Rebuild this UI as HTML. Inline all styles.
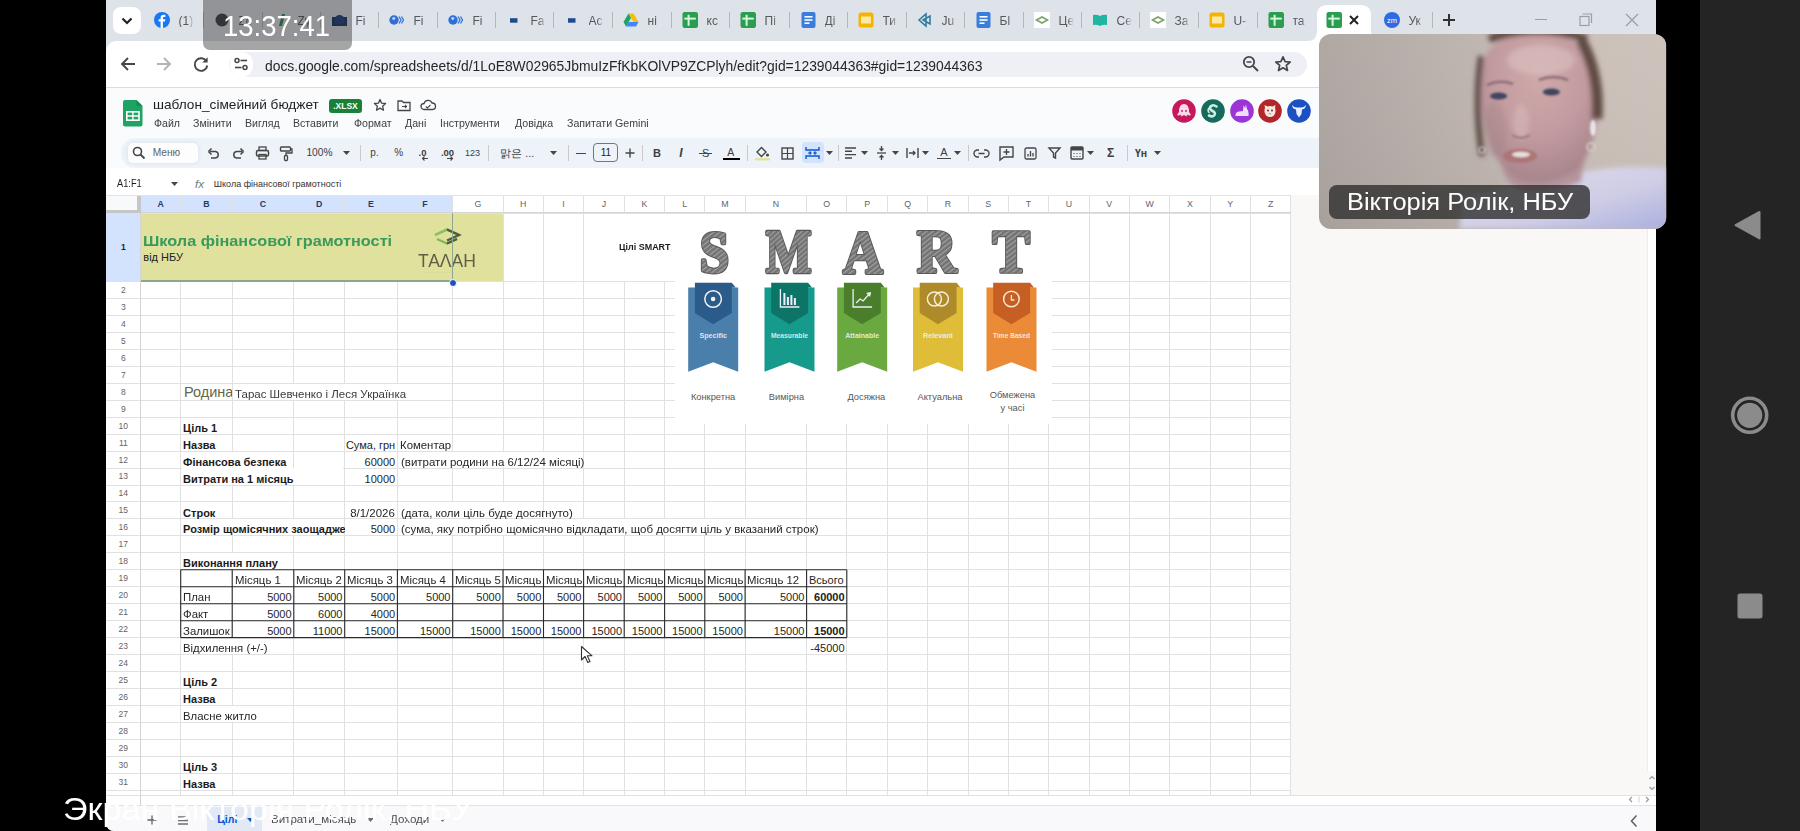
<!DOCTYPE html><html><head><meta charset="utf-8"><style>
*{margin:0;padding:0;box-sizing:border-box}
html,body{width:1800px;height:831px;overflow:hidden;background:#000;font-family:"Liberation Sans",sans-serif;position:relative}
.a{position:absolute}
.t{position:absolute;white-space:nowrap;line-height:1}
svg{position:absolute;overflow:visible}
</style></head><body>

<div class="a" style="left:1700px;top:0;width:100px;height:831px;background:#242424"></div>
<svg style="left:1700px;top:0" width="100" height="831"><path d="M59.5 212 L59.5 238.5 L35.5 225.2 Z" fill="#8b8b8b" stroke="#8b8b8b" stroke-width="2" stroke-linejoin="round"/><circle cx="49.7" cy="415.3" r="17" fill="none" stroke="#8b8b8b" stroke-width="3.6"/><circle cx="49.7" cy="415.3" r="12.6" fill="#8b8b8b"/><rect x="37.5" y="593.5" width="25" height="25" rx="2.5" fill="#8b8b8b"/></svg>
<div class="a" style="left:106px;top:0;width:1550px;height:831px;background:#dee2e9;border-bottom-left-radius:8px;overflow:hidden"></div>
<div class="a" style="left:113px;top:6.5px;width:28px;height:27px;background:#fff;border-radius:8px"></div>
<svg style="left:113px;top:6.5px" width="28" height="27"><path d="M9.5 11.5 L14 16 L18.5 11.5" fill="none" stroke="#202124" stroke-width="2.2"/></svg>
<svg style="left:154.0px;top:12.2px" width="16" height="16"><circle cx="8" cy="8" r="8" fill="#1877f2"/><path d="M8.9 16 V9.6 H11 L11.3 7.3 H8.9 V6.1 C8.9 5.4 9.2 5 10 5 H11.4 V3 C11 2.9 10.3 2.8 9.6 2.8 C7.6 2.8 6.6 4 6.6 5.9 V7.3 H4.6 V9.6 H6.6 V16 Z" fill="#fff"/></svg>
<div class="t" style="left:178.5px;top:14.6px;font-size:12px;color:#55585d;width:15px;overflow:hidden;-webkit-mask-image:linear-gradient(90deg,#000 55%,transparent)">(1)</div>
<svg style="left:214.0px;top:12.2px" width="16" height="16"><circle cx="8" cy="8" r="6.5" fill="#3a3d41"/></svg>
<div class="t" style="left:238.5px;top:14.6px;font-size:12px;color:#55585d;width:15px;overflow:hidden;-webkit-mask-image:linear-gradient(90deg,#000 55%,transparent)">Zo</div>
<div class="a" style="left:202.5px;top:12px;width:1.5px;height:16px;background:#b4b7bb"></div>
<svg style="left:273.0px;top:12.2px" width="16" height="16"><path d="M6 14 L9 2 L12 2 L9 14 Z" fill="#2f8a4a"/></svg>
<div class="t" style="left:297.5px;top:14.6px;font-size:12px;color:#55585d;width:15px;overflow:hidden;-webkit-mask-image:linear-gradient(90deg,#000 55%,transparent)">Zy</div>
<div class="a" style="left:261.5px;top:12px;width:1.5px;height:16px;background:#b4b7bb"></div>
<svg style="left:331.0px;top:12.2px" width="16" height="16"><rect x="1" y="5" width="15" height="9" fill="#14346e"/><circle cx="8.5" cy="8" r="5" fill="#1c3f80"/></svg>
<div class="t" style="left:355.5px;top:14.6px;font-size:12px;color:#55585d;width:15px;overflow:hidden;-webkit-mask-image:linear-gradient(90deg,#000 55%,transparent)">Fi</div>
<div class="a" style="left:319.5px;top:12px;width:1.5px;height:16px;background:#b4b7bb"></div>
<svg style="left:389.0px;top:12.2px" width="16" height="16"><circle cx="5" cy="8" r="4.7" fill="#2f6fd6"/><path d="M3 6 Q5 4 6.5 6 Q6 8.5 4 8 Z" fill="#fff" opacity=".7"/><path d="M10 4.5 L12 8 L10 11.5 M12.5 4.5 L14.5 8 L12.5 11.5" fill="none" stroke="#3a7be0" stroke-width="1.4"/></svg>
<div class="t" style="left:413.5px;top:14.6px;font-size:12px;color:#55585d;width:15px;overflow:hidden;-webkit-mask-image:linear-gradient(90deg,#000 55%,transparent)">Fi</div>
<div class="a" style="left:377.5px;top:12px;width:1.5px;height:16px;background:#b4b7bb"></div>
<svg style="left:448.0px;top:12.2px" width="16" height="16"><circle cx="5" cy="8" r="4.7" fill="#2f6fd6"/><path d="M3 6 Q5 4 6.5 6 Q6 8.5 4 8 Z" fill="#fff" opacity=".7"/><path d="M10 4.5 L12 8 L10 11.5 M12.5 4.5 L14.5 8 L12.5 11.5" fill="none" stroke="#3a7be0" stroke-width="1.4"/></svg>
<div class="t" style="left:472.5px;top:14.6px;font-size:12px;color:#55585d;width:15px;overflow:hidden;-webkit-mask-image:linear-gradient(90deg,#000 55%,transparent)">Fi</div>
<div class="a" style="left:436.5px;top:12px;width:1.5px;height:16px;background:#b4b7bb"></div>
<svg style="left:506.0px;top:12.2px" width="16" height="16"><rect x="4" y="6.2" width="7.5" height="4.5" fill="#1e4b8c"/></svg>
<div class="t" style="left:530.5px;top:14.6px;font-size:12px;color:#55585d;width:15px;overflow:hidden;-webkit-mask-image:linear-gradient(90deg,#000 55%,transparent)">Fa</div>
<div class="a" style="left:494.5px;top:12px;width:1.5px;height:16px;background:#b4b7bb"></div>
<svg style="left:564.0px;top:12.2px" width="16" height="16"><rect x="4" y="6.2" width="7.5" height="4.5" fill="#1e4b8c"/></svg>
<div class="t" style="left:588.5px;top:14.6px;font-size:12px;color:#55585d;width:15px;overflow:hidden;-webkit-mask-image:linear-gradient(90deg,#000 55%,transparent)">Ac</div>
<div class="a" style="left:552.5px;top:12px;width:1.5px;height:16px;background:#b4b7bb"></div>
<svg style="left:623.0px;top:12.2px" width="16" height="16"><path d="M5.5 1.5 H10.5 L15.5 10 H10.5 Z" fill="#fbbc04"/><path d="M5.5 1.5 L0.5 10 L3 14.5 L8 6 Z" fill="#1fa463"/><path d="M3 14.5 H13 L15.5 10 H5.5 Z" fill="#4285f4"/></svg>
<div class="t" style="left:647.5px;top:14.6px;font-size:12px;color:#55585d;width:15px;overflow:hidden;-webkit-mask-image:linear-gradient(90deg,#000 55%,transparent)">ні</div>
<div class="a" style="left:611.5px;top:12px;width:1.5px;height:16px;background:#b4b7bb"></div>
<svg style="left:682.0px;top:12.2px" width="16" height="16"><rect x="0.5" y="0" width="15.5" height="16" rx="2.2" fill="#2a9d50"/><rect x="5.6" y="2.8" width="2" height="11" fill="#d5f8dc"/><rect x="2.3" y="5.6" width="11.5" height="2" fill="#d5f8dc"/></svg>
<div class="t" style="left:706.5px;top:14.6px;font-size:12px;color:#55585d;width:15px;overflow:hidden;-webkit-mask-image:linear-gradient(90deg,#000 55%,transparent)">кс</div>
<div class="a" style="left:670.5px;top:12px;width:1.5px;height:16px;background:#b4b7bb"></div>
<svg style="left:740.0px;top:12.2px" width="16" height="16"><rect x="0.5" y="0" width="15.5" height="16" rx="2.2" fill="#2a9d50"/><rect x="5.6" y="2.8" width="2" height="11" fill="#d5f8dc"/><rect x="2.3" y="5.6" width="11.5" height="2" fill="#d5f8dc"/></svg>
<div class="t" style="left:764.5px;top:14.6px;font-size:12px;color:#55585d;width:15px;overflow:hidden;-webkit-mask-image:linear-gradient(90deg,#000 55%,transparent)">Пі</div>
<div class="a" style="left:728.5px;top:12px;width:1.5px;height:16px;background:#b4b7bb"></div>
<svg style="left:800.0px;top:12.2px" width="16" height="16"><rect x="1.5" y="0" width="14" height="16" rx="2" fill="#3b7ddd"/><rect x="4.5" y="4" width="8" height="1.6" fill="#fff"/><rect x="4.5" y="7.2" width="8" height="1.6" fill="#fff"/><rect x="4.5" y="10.4" width="5" height="1.6" fill="#fff"/></svg>
<div class="t" style="left:824.5px;top:14.6px;font-size:12px;color:#55585d;width:15px;overflow:hidden;-webkit-mask-image:linear-gradient(90deg,#000 55%,transparent)">Ді</div>
<div class="a" style="left:788.5px;top:12px;width:1.5px;height:16px;background:#b4b7bb"></div>
<svg style="left:858.0px;top:12.2px" width="16" height="16"><rect x="0.5" y="0.5" width="15" height="15" rx="2.5" fill="#f4b400"/><rect x="3" y="4.5" width="10" height="7" fill="#fbe9a6"/></svg>
<div class="t" style="left:882.5px;top:14.6px;font-size:12px;color:#55585d;width:15px;overflow:hidden;-webkit-mask-image:linear-gradient(90deg,#000 55%,transparent)">Ти</div>
<div class="a" style="left:846.5px;top:12px;width:1.5px;height:16px;background:#b4b7bb"></div>
<svg style="left:917.0px;top:12.2px" width="16" height="16"><path d="M2 8 L9 2 L9 14 Z M6 8 L13 4 L13 12 Z" fill="none" stroke="#2a7a9a" stroke-width="1.5"/></svg>
<div class="t" style="left:941.5px;top:14.6px;font-size:12px;color:#55585d;width:15px;overflow:hidden;-webkit-mask-image:linear-gradient(90deg,#000 55%,transparent)">Ju</div>
<div class="a" style="left:905.5px;top:12px;width:1.5px;height:16px;background:#b4b7bb"></div>
<svg style="left:975.0px;top:12.2px" width="16" height="16"><rect x="1.5" y="0" width="14" height="16" rx="2" fill="#3b7ddd"/><rect x="4.5" y="4" width="8" height="1.6" fill="#fff"/><rect x="4.5" y="7.2" width="8" height="1.6" fill="#fff"/><rect x="4.5" y="10.4" width="5" height="1.6" fill="#fff"/></svg>
<div class="t" style="left:999.5px;top:14.6px;font-size:12px;color:#55585d;width:15px;overflow:hidden;-webkit-mask-image:linear-gradient(90deg,#000 55%,transparent)">Бl</div>
<div class="a" style="left:963.5px;top:12px;width:1.5px;height:16px;background:#b4b7bb"></div>
<svg style="left:1034.0px;top:12.2px" width="16" height="16"><rect x="0" y="0" width="16" height="16" fill="#fff"/><path d="M2.5 8 L8 5 L13.5 8 L8 11 Z" fill="none" stroke="#7aa36a" stroke-width="1.6"/></svg>
<div class="t" style="left:1058.5px;top:14.6px;font-size:12px;color:#55585d;width:15px;overflow:hidden;-webkit-mask-image:linear-gradient(90deg,#000 55%,transparent)">Це</div>
<div class="a" style="left:1022.5px;top:12px;width:1.5px;height:16px;background:#b4b7bb"></div>
<svg style="left:1092.0px;top:12.2px" width="16" height="16"><path d="M1 3 Q4.5 2 8 4 Q11.5 2 15 3 V13 Q11.5 12 8 14 Q4.5 12 1 13 Z" fill="#1fb5a0"/></svg>
<div class="t" style="left:1116.5px;top:14.6px;font-size:12px;color:#55585d;width:15px;overflow:hidden;-webkit-mask-image:linear-gradient(90deg,#000 55%,transparent)">Се</div>
<div class="a" style="left:1080.5px;top:12px;width:1.5px;height:16px;background:#b4b7bb"></div>
<svg style="left:1150.0px;top:12.2px" width="16" height="16"><rect x="0" y="0" width="16" height="16" fill="#fff"/><path d="M2.5 8 L8 5 L13.5 8 L8 11 Z" fill="none" stroke="#7aa36a" stroke-width="1.6"/></svg>
<div class="t" style="left:1174.5px;top:14.6px;font-size:12px;color:#55585d;width:15px;overflow:hidden;-webkit-mask-image:linear-gradient(90deg,#000 55%,transparent)">За</div>
<div class="a" style="left:1138.5px;top:12px;width:1.5px;height:16px;background:#b4b7bb"></div>
<svg style="left:1209.0px;top:12.2px" width="16" height="16"><rect x="0.5" y="0.5" width="15" height="15" rx="2.5" fill="#f4b400"/><rect x="3" y="4.5" width="10" height="7" fill="#fbe9a6"/></svg>
<div class="t" style="left:1233.5px;top:14.6px;font-size:12px;color:#55585d;width:15px;overflow:hidden;-webkit-mask-image:linear-gradient(90deg,#000 55%,transparent)">U-</div>
<div class="a" style="left:1197.5px;top:12px;width:1.5px;height:16px;background:#b4b7bb"></div>
<svg style="left:1268.0px;top:12.2px" width="16" height="16"><rect x="0.5" y="0" width="15.5" height="16" rx="2.2" fill="#2a9d50"/><rect x="5.6" y="2.8" width="2" height="11" fill="#d5f8dc"/><rect x="2.3" y="5.6" width="11.5" height="2" fill="#d5f8dc"/></svg>
<div class="t" style="left:1292.5px;top:14.6px;font-size:12px;color:#55585d;width:15px;overflow:hidden;-webkit-mask-image:linear-gradient(90deg,#000 55%,transparent)">та</div>
<div class="a" style="left:1256.5px;top:12px;width:1.5px;height:16px;background:#b4b7bb"></div>
<div class="a" style="left:1431.5px;top:12px;width:1.5px;height:16px;background:#b4b7bb"></div>
<div class="a" style="left:1317px;top:5px;width:54px;height:36px;background:#fff;border-radius:9px 9px 0 0"></div>
<svg style="left:1307px;top:30px" width="74" height="11"><path d="M0 11 Q10 11 10 1 V11 Z M74 11 Q64 11 64 1 V11 Z" fill="#fff"/></svg>
<svg style="left:1326.0px;top:12.2px" width="16" height="16"><rect x="0.5" y="0" width="15.5" height="16" rx="2.2" fill="#2a9d50"/><rect x="5.6" y="2.8" width="2" height="11" fill="#d5f8dc"/><rect x="2.3" y="5.6" width="11.5" height="2" fill="#d5f8dc"/></svg>
<svg style="left:1348px;top:14px" width="12" height="12"><path d="M2 2 L10 10 M10 2 L2 10" stroke="#202124" stroke-width="2"/></svg>
<svg style="left:1384.0px;top:12.2px" width="16" height="16"><circle cx="8" cy="8" r="8" fill="#2d6ce0"/><text x="8" y="10.6" font-family="Liberation Sans" font-size="7.5" fill="#fff" text-anchor="middle">zm</text></svg>
<div class="t" style="left:1408.5px;top:14.6px;font-size:12px;color:#55585d;width:15px;overflow:hidden;-webkit-mask-image:linear-gradient(90deg,#000 55%,transparent)">Ук</div>
<svg style="left:1441px;top:12px" width="16" height="16"><path d="M8 2 V14 M2 8 H14" stroke="#303134" stroke-width="2"/></svg>
<div class="a" style="left:1535px;top:18.5px;width:12px;height:1.3px;background:#9aa0a6"></div>
<svg style="left:1579px;top:13px" width="14" height="14"><rect x="1" y="3.5" width="9" height="9" fill="none" stroke="#9aa0a6" stroke-width="1.2"/><path d="M3.5 1 H12.5 V10" fill="none" stroke="#9aa0a6" stroke-width="1.2"/></svg>
<svg style="left:1625px;top:13px" width="14" height="14"><path d="M1 1 L13 13 M13 1 L1 13" stroke="#9aa0a6" stroke-width="1.3"/></svg>
<div class="a" style="left:106px;top:40.5px;width:1550px;height:46.5px;background:#fff;border-top-left-radius:10px"></div>
<svg style="left:119px;top:55px" width="18" height="18"><path d="M16 9 H3 M9 3 L3 9 L9 15" fill="none" stroke="#444746" stroke-width="1.9"/></svg>
<svg style="left:155px;top:55px" width="18" height="18"><path d="M2 9 H15 M9 3 L15 9 L9 15" fill="none" stroke="#b0b3b8" stroke-width="1.9"/></svg>
<svg style="left:192px;top:55px" width="18" height="18"><path d="M14.6 6.5 A6.3 6.3 0 1 0 15.3 10.5" fill="none" stroke="#444746" stroke-width="1.9"/><path d="M15.6 2.3 V7.6 H10.3 Z" fill="#444746"/></svg>
<div class="a" style="left:229px;top:51.5px;width:1078px;height:25.5px;background:#eef0f5;border-radius:13px"></div>
<div class="a" style="left:230px;top:52px;width:23px;height:24.5px;background:#fff;border-radius:12px"></div>
<svg style="left:233px;top:56px" width="16" height="16"><circle cx="4" cy="4.5" r="2" fill="none" stroke="#444746" stroke-width="1.5"/><path d="M7.5 4.5 H14" stroke="#444746" stroke-width="1.6"/><circle cx="12" cy="11.5" r="2" fill="none" stroke="#444746" stroke-width="1.5"/><path d="M2 11.5 H8.5" stroke="#444746" stroke-width="1.6"/></svg>
<div class="t" style="left:264.50px;top:57.60px;font-size:15px;color:#262626;font-weight:normal;transform: scaleX(0.925);transform-origin:left center;">docs.google.com/spreadsheets/d/1LoE8W02965JbmuIzFfKbKOlVP9ZCPlyh/edit?gid=1239044363#gid=1239044363</div>
<svg style="left:1242px;top:55px" width="18" height="18"><circle cx="7" cy="7" r="5.2" fill="none" stroke="#444746" stroke-width="1.8"/><path d="M11 11 L16 16" stroke="#444746" stroke-width="2"/><path d="M4.5 7 H9.5" stroke="#444746" stroke-width="1.5"/></svg>
<svg style="left:1274px;top:55px" width="18" height="18"><path d="M9 1.8 L11.1 6.6 L16.2 7 L12.3 10.4 L13.5 15.5 L9 12.8 L4.5 15.5 L5.7 10.4 L1.8 7 L6.9 6.6 Z" fill="none" stroke="#444746" stroke-width="1.7" stroke-linejoin="round"/></svg>
<div class="a" style="left:106px;top:86.5px;width:1550px;height:1px;background:#dadce0"></div>
<div class="a" style="left:106px;top:87.5px;width:1550px;height:107.5px;background:#f9fbfd"></div>
<svg style="left:122.5px;top:99.7px" width="20" height="26.5"><path d="M2 0 H13.5 L19.5 6 V24.5 A2 2 0 0 1 17.5 26.5 H2 A2 2 0 0 1 0 24.5 V2 A2 2 0 0 1 2 0 Z" fill="#1ea362"/><path d="M13.5 0 V6 H19.5 Z" fill="#178a51"/><rect x="3.8" y="11.8" width="12.2" height="8.4" fill="none" stroke="#fff" stroke-width="1.6"/><path d="M3.8 16 H16 M9.9 11.8 V20.2" stroke="#fff" stroke-width="1.4"/></svg>
<div class="t" style="left:152.60px;top:97.83px;font-size:13.2px;color:#1f1f1f;font-weight:normal;transform: scaleX(1.035);transform-origin:left center;">шаблон_сімейний бюджет</div>
<div class="a" style="left:329px;top:98.7px;width:33px;height:14px;background:#188038;border-radius:3px"></div>
<div class="t" style="left:345.50px;top:102.00px;font-size:8.5px;color:#fff;font-weight:bold;transform:translateX(-50%);transform-origin:center center;">.XLSX</div>
<svg style="left:373px;top:98px" width="14" height="14"><path d="M7 1.5 L8.6 5.2 L12.6 5.5 L9.6 8.2 L10.5 12.2 L7 10.1 L3.5 12.2 L4.4 8.2 L1.4 5.5 L5.4 5.2 Z" fill="none" stroke="#444746" stroke-width="1.3" stroke-linejoin="round"/></svg>
<svg style="left:397px;top:99px" width="14" height="13"><path d="M1 2 H5 L6.5 3.5 H13 V11.5 H1 Z" fill="none" stroke="#444746" stroke-width="1.3"/><path d="M5 7.5 H9.5 M8 6 L9.5 7.5 L8 9" fill="none" stroke="#444746" stroke-width="1.1"/></svg>
<svg style="left:420px;top:98px" width="16" height="14"><path d="M4 11.5 A3 3 0 0 1 4 5.5 A4.2 4.2 0 0 1 12 5 A3.2 3.2 0 0 1 12.5 11.5 Z" fill="none" stroke="#444746" stroke-width="1.3"/><path d="M5.8 8.5 L7.5 10 L10.5 7" fill="none" stroke="#444746" stroke-width="1.1"/></svg>
<div class="t" style="left:153.50px;top:119.30px;font-size:10.4px;color:#3c4043;font-weight:normal;transform: scaleX(1.02);transform-origin:left center;">Файл</div>
<div class="t" style="left:192.60px;top:119.30px;font-size:10.4px;color:#3c4043;font-weight:normal;transform: scaleX(1.02);transform-origin:left center;">Змінити</div>
<div class="t" style="left:245.10px;top:119.30px;font-size:10.4px;color:#3c4043;font-weight:normal;transform: scaleX(1.02);transform-origin:left center;">Вигляд</div>
<div class="t" style="left:293.20px;top:119.30px;font-size:10.4px;color:#3c4043;font-weight:normal;transform: scaleX(1.02);transform-origin:left center;">Вставити</div>
<div class="t" style="left:353.50px;top:119.30px;font-size:10.4px;color:#3c4043;font-weight:normal;transform: scaleX(1.02);transform-origin:left center;">Формат</div>
<div class="t" style="left:404.60px;top:119.30px;font-size:10.4px;color:#3c4043;font-weight:normal;transform: scaleX(1.02);transform-origin:left center;">Дані</div>
<div class="t" style="left:439.70px;top:119.30px;font-size:10.4px;color:#3c4043;font-weight:normal;transform: scaleX(1.02);transform-origin:left center;">Інструменти</div>
<div class="t" style="left:515.00px;top:119.30px;font-size:10.4px;color:#3c4043;font-weight:normal;transform: scaleX(1.02);transform-origin:left center;">Довідка</div>
<div class="t" style="left:567.30px;top:119.30px;font-size:10.4px;color:#3c4043;font-weight:normal;transform: scaleX(1.02);transform-origin:left center;">Запитати Gemini</div>
<svg style="left:1172.0px;top:98.6px" width="24" height="24"><circle cx="12" cy="12" r="11.8" fill="#c8175c"/><path d="M7 13 Q7 5 12 5 Q17 5 17 13 L19 16 Q17 17 15.5 15.5 L14.5 17.5 L12 16 L9.5 17.5 L8.5 15.5 Q7 17 5 16 Z" fill="#f6dbe6"/><circle cx="10" cy="12" r="0.9" fill="#c8175c"/><circle cx="14" cy="12" r="0.9" fill="#c8175c"/></svg>
<svg style="left:1200.9px;top:98.6px" width="24" height="24"><circle cx="12" cy="12" r="11.8" fill="#156a5b"/><path d="M15.5 7.5 Q12 5 9.5 7.5 Q8 10 11 11.8 Q15 13.5 13.5 16 Q11.5 18.5 8 16.5" fill="none" stroke="#cdeee4" stroke-width="2.6" stroke-linecap="round"/><path d="M8 9 Q6 12 8.5 14" fill="none" stroke="#cdeee4" stroke-width="1.6"/></svg>
<svg style="left:1230.0px;top:98.6px" width="24" height="24"><circle cx="12" cy="12" r="11.8" fill="#9b35d8"/><path d="M5.5 17 Q5 13 9 12.5 L13 12 L13.5 6 L15 9 L16 5.5 L17 10 Q19 12 18.5 17 Z" fill="#f0dcfb"/></svg>
<svg style="left:1258.3px;top:98.6px" width="24" height="24"><circle cx="12" cy="12" r="11.8" fill="#b3252b"/><path d="M7 9 L6.5 6 L9.5 7.5 Q12 6.5 14.5 7.5 L17.5 6 L17 9 Q18.5 13 16 16.5 Q12 19.5 8 16.5 Q5.5 13 7 9 Z" fill="#f7e6e0"/><circle cx="10" cy="11.5" r="0.9" fill="#6b1b1b"/><circle cx="14" cy="11.5" r="0.9" fill="#6b1b1b"/><path d="M11 14.5 H13 L12 15.5 Z" fill="#6b1b1b"/></svg>
<svg style="left:1287.3px;top:98.6px" width="24" height="24"><circle cx="12" cy="12" r="11.8" fill="#1b50c2"/><path d="M5 6 Q5.5 10 9 10.5 L9.5 15 L12 18.5 L14.5 15 L15 10.5 Q18.5 10 19 6 Q17 8.5 14 8.5 H10 Q7 8.5 5 6 Z" fill="#e8eefc"/></svg>
<div class="a" style="left:121px;top:138px;width:1220px;height:29.5px;background:#eef2f9;border-radius:14px 0 0 14px"></div>
<div class="a" style="left:127.7px;top:143px;width:70.5px;height:20px;background:#fdfdfe;border-radius:5px;box-shadow:0 0 4px rgba(40,60,120,.10)"></div>
<svg style="left:132.0px;top:146.3px" width="14" height="14"><circle cx="5.5" cy="5.5" r="4" fill="none" stroke="#444746" stroke-width="1.6"/><path d="M8.5 8.5 L12.5 12.5" stroke="#444746" stroke-width="1.8"/></svg>
<div class="t" style="left:152.70px;top:148.27px;font-size:10.2px;color:#5f6368;font-weight:normal;">Меню</div>
<svg style="left:207.0px;top:147.3px" width="14" height="12"><path d="M3 4.5 H8.5 A3.3 3.3 0 0 1 8.5 11 H4" fill="none" stroke="#444746" stroke-width="1.5"/><path d="M1.5 4.5 L4.5 1.5 M1.5 4.5 L4.5 7.5" fill="none" stroke="#444746" stroke-width="1.5"/></svg>
<svg style="left:231.0px;top:147.3px" width="14" height="12"><path d="M11 4.5 H5.5 A3.3 3.3 0 0 0 5.5 11 H10" fill="none" stroke="#444746" stroke-width="1.5"/><path d="M12.5 4.5 L9.5 1.5 M12.5 4.5 L9.5 7.5" fill="none" stroke="#444746" stroke-width="1.5"/></svg>
<svg style="left:255.0px;top:146.3px" width="15" height="14"><rect x="1.5" y="4.5" width="12" height="5.5" rx="1.5" fill="none" stroke="#444746" stroke-width="1.5"/><rect x="4" y="1" width="7" height="3.5" fill="none" stroke="#444746" stroke-width="1.3"/><rect x="4" y="8.5" width="7" height="4.5" fill="none" stroke="#444746" stroke-width="1.3"/></svg>
<svg style="left:279.0px;top:146.3px" width="14" height="15"><rect x="1.5" y="1" width="10" height="4" rx="1" fill="none" stroke="#444746" stroke-width="1.4"/><path d="M11.5 3 H13 V7 H7 V9.5" fill="none" stroke="#444746" stroke-width="1.3"/><rect x="5.5" y="9.5" width="3" height="5" rx="1" fill="none" stroke="#444746" stroke-width="1.3"/></svg>
<div class="t" style="left:306.40px;top:148.37px;font-size:10.2px;color:#3c4043;font-weight:normal;">100%</div>
<svg style="left:343.2px;top:151.3px" width="7" height="4"><path d="M0 0 H7 L3.5 4 Z" fill="#444746"/></svg>
<div class="a" style="left:360.3px;top:145.3px;width:1px;height:16px;background:#c7c9cc"></div>
<div class="t" style="left:374.50px;top:148.44px;font-size:10px;color:#3c4043;font-weight:normal;transform:translateX(-50%);transform-origin:center center;">р.</div>
<div class="t" style="left:398.80px;top:148.44px;font-size:10px;color:#3c4043;font-weight:normal;transform:translateX(-50%);transform-origin:center center;">%</div>
<div class="t" style="left:422.50px;top:147.76px;font-size:9.5px;color:#3c4043;font-weight:bold;transform:translateX(-50%);transform-origin:center center;">.0</div>
<svg style="left:421.0px;top:156.3px" width="8" height="5"><path d="M7 2.5 H1.5 M3.5 0.5 L1.5 2.5 L3.5 4.5" fill="none" stroke="#444746" stroke-width="1.1"/></svg>
<div class="t" style="left:447.50px;top:147.76px;font-size:9.5px;color:#3c4043;font-weight:bold;transform:translateX(-50%);transform-origin:center center;">.00</div>
<svg style="left:446.0px;top:156.3px" width="8" height="5"><path d="M1 2.5 H6.5 M4.5 0.5 L6.5 2.5 L4.5 4.5" fill="none" stroke="#444746" stroke-width="1.1"/></svg>
<div class="t" style="left:472.50px;top:149.08px;font-size:9px;color:#3c4043;font-weight:normal;transform:translateX(-50%);transform-origin:center center;">123</div>
<div class="a" style="left:488.4px;top:145.3px;width:1px;height:16px;background:#c7c9cc"></div>
<div class="t" style="left:500.40px;top:148.11px;font-size:10.5px;color:#3c4043;font-weight:normal;">맑은 ...</div>
<svg style="left:550.3px;top:151.3px" width="7" height="4"><path d="M0 0 H7 L3.5 4 Z" fill="#444746"/></svg>
<div class="a" style="left:568.4px;top:145.3px;width:1px;height:16px;background:#c7c9cc"></div>
<div class="a" style="left:576px;top:152.7px;width:10px;height:1.4px;background:#444746"></div>
<div class="a" style="left:593.3px;top:143.4px;width:25.2px;height:18.4px;border:1.1px solid #747775;border-radius:4px"></div>
<div class="t" style="left:606.00px;top:148.44px;font-size:10px;color:#1f1f1f;font-weight:normal;transform:translateX(-50%);transform-origin:center center;">11</div>
<svg style="left:624.5px;top:148.3px" width="10" height="10"><path d="M5 0.5 V9.5 M0.5 5 H9.5" stroke="#444746" stroke-width="1.4"/></svg>
<div class="a" style="left:642.2px;top:145.3px;width:1px;height:16px;background:#c7c9cc"></div>
<div class="t" style="left:657.00px;top:147.89px;font-size:11px;color:#3c4043;font-weight:bold;transform:translateX(-50%);transform-origin:center center;">B</div>
<div class="t" style="left:681.00px;top:147.04px;font-size:12px;color:#3c4043;font-weight:bold;transform:translateX(-50%);transform-origin:center center;font-style:italic;font-family:"Liberation Serif",serif;">I</div>
<div class="t" style="left:705.60px;top:147.89px;font-size:11px;color:#3c4043;font-weight:normal;transform:translateX(-50%);transform-origin:center center;">S</div>
<div class="a" style="left:699px;top:152.8px;width:13px;height:1.3px;background:#444746"></div>
<div class="t" style="left:730.70px;top:146.91px;font-size:10.5px;color:#3c4043;font-weight:normal;transform:translateX(-50%);transform-origin:center center;">A</div>
<div class="a" style="left:722.5px;top:157.5px;width:17px;height:2.5px;background:#000"></div>
<div class="a" style="left:746.7px;top:145.3px;width:1px;height:16px;background:#c7c9cc"></div>
<svg style="left:754.0px;top:145.3px" width="17" height="16"><path d="M3 7 L7.5 2.5 L12 7 L7.5 11.5 Z" fill="none" stroke="#444746" stroke-width="1.4"/><circle cx="13.5" cy="10" r="1.6" fill="#444746"/><rect x="1" y="13.2" width="15" height="2.2" fill="#e5e08c"/></svg>
<svg style="left:781.0px;top:146.8px" width="13" height="13"><rect x="1" y="1" width="11" height="11" fill="none" stroke="#444746" stroke-width="1.4"/><path d="M6.5 1 V12 M1 6.5 H12" stroke="#444746" stroke-width="1.2"/></svg>
<div class="a" style="left:801.8px;top:141.7px;width:22.6px;height:21.7px;background:#d3e3fd;border-radius:4px"></div>
<svg style="left:805.0px;top:146.3px" width="15" height="14"><path d="M1 1 V4 H14 V1 M1 13 V10 H14 V13" fill="none" stroke="#0b57d0" stroke-width="1.4"/><path d="M3 7 H5.5 M9.5 7 H12 M4.5 5.5 L6 7 L4.5 8.5 M10.5 5.5 L9 7 L10.5 8.5" fill="none" stroke="#0b57d0" stroke-width="1.2"/></svg>
<svg style="left:825.5px;top:151.3px" width="7" height="4"><path d="M0 0 H7 L3.5 4 Z" fill="#444746"/></svg>
<div class="a" style="left:837.5px;top:145.3px;width:1px;height:16px;background:#c7c9cc"></div>
<svg style="left:843.5px;top:147.3px" width="13" height="12"><path d="M1 1 H12 M1 4.3 H8 M1 7.6 H12 M1 11 H8" stroke="#444746" stroke-width="1.4"/></svg>
<svg style="left:860.5px;top:151.3px" width="7" height="4"><path d="M0 0 H7 L3.5 4 Z" fill="#444746"/></svg>
<svg style="left:876.0px;top:145.3px" width="11" height="16"><path d="M1 8 H10" stroke="#444746" stroke-width="1.3"/><path d="M5.5 1 V5.5 M3.5 3.5 L5.5 5.5 L7.5 3.5 M5.5 15 V10.5 M3.5 12.5 L5.5 10.5 L7.5 12.5" fill="none" stroke="#444746" stroke-width="1.3"/></svg>
<svg style="left:891.8px;top:151.3px" width="7" height="4"><path d="M0 0 H7 L3.5 4 Z" fill="#444746"/></svg>
<svg style="left:905.5px;top:147.3px" width="13" height="12"><path d="M1 1 V11 M12 1 V11 M3 6 H9 M7 4 L9 6 L7 8" fill="none" stroke="#444746" stroke-width="1.4"/></svg>
<svg style="left:922.3px;top:151.3px" width="7" height="4"><path d="M0 0 H7 L3.5 4 Z" fill="#444746"/></svg>
<div class="t" style="left:943.90px;top:147.19px;font-size:11px;color:#3c4043;font-weight:normal;transform:translateX(-50%);transform-origin:center center;">A</div>
<div class="a" style="left:937px;top:157.8px;width:14px;height:1.2px;background:#444746"></div>
<svg style="left:953.7px;top:151.3px" width="7" height="4"><path d="M0 0 H7 L3.5 4 Z" fill="#444746"/></svg>
<div class="a" style="left:967.5px;top:145.3px;width:1px;height:16px;background:#c7c9cc"></div>
<svg style="left:973.0px;top:148.8px" width="17" height="9"><path d="M6 1 H4.5 A3.5 3.5 0 0 0 4.5 8 H6 M11 1 H12.5 A3.5 3.5 0 0 1 12.5 8 H11 M5.5 4.5 H11.5" fill="none" stroke="#444746" stroke-width="1.4"/></svg>
<svg style="left:998.5px;top:146.3px" width="15" height="15"><path d="M1 1 H14 V11 H5 L1 14 Z" fill="none" stroke="#444746" stroke-width="1.4"/><path d="M7.5 3 V9 M4.5 6 H10.5" stroke="#444746" stroke-width="1.3"/></svg>
<svg style="left:1023.5px;top:146.8px" width="13" height="13"><rect x="1" y="1" width="11" height="11" rx="1.5" fill="none" stroke="#444746" stroke-width="1.3"/><path d="M4 9.5 V7 M6.5 9.5 V4 M9 9.5 V6" stroke="#444746" stroke-width="1.3"/></svg>
<svg style="left:1048.0px;top:147.3px" width="13" height="12"><path d="M1 1 H12 L7.5 6 V11 L5.5 10 V6 Z" fill="none" stroke="#444746" stroke-width="1.4"/></svg>
<svg style="left:1070.0px;top:146.3px" width="14" height="14"><rect x="1" y="1" width="12" height="12" rx="1" fill="none" stroke="#444746" stroke-width="1.4"/><rect x="1" y="1" width="12" height="3.5" fill="#444746"/><path d="M4 7 V7.5 M7 7 V7.5 M10 7 V7.5 M4 10 V10.5 M7 10 V10.5 M10 10 V10.5" stroke="#444746" stroke-width="2"/></svg>
<svg style="left:1087.1px;top:151.3px" width="7" height="4"><path d="M0 0 H7 L3.5 4 Z" fill="#444746"/></svg>
<div class="t" style="left:1110.60px;top:147.14px;font-size:12px;color:#3c4043;font-weight:bold;transform:translateX(-50%);transform-origin:center center;">Σ</div>
<div class="a" style="left:1126.7px;top:145.3px;width:1px;height:16px;background:#c7c9cc"></div>
<div class="t" style="left:1141.00px;top:148.41px;font-size:10.5px;color:#3c4043;font-weight:bold;transform:translateX(-50%);transform-origin:center center;">Үн</div>
<svg style="left:1153.7px;top:151.3px" width="7" height="4"><path d="M0 0 H7 L3.5 4 Z" fill="#444746"/></svg>
<div class="a" style="left:106px;top:168px;width:1550px;height:27px;background:#fff"></div>
<div class="t" style="left:116.50px;top:178.98px;font-size:10.3px;color:#1f1f1f;font-weight:normal;transform: scaleX(0.9);transform-origin:left center;">A1:F1</div>
<svg style="left:170.5px;top:182.0px" width="7" height="4"><path d="M0 0 H7 L3.5 4 Z" fill="#444746"/></svg>
<div class="t" style="left:195.00px;top:178.77px;font-size:11.5px;color:#747775;font-weight:normal;font-style:italic;font-family:"Liberation Serif",serif;">fx</div>
<div class="t" style="left:213.80px;top:179.68px;font-size:9px;color:#333;font-weight:normal;">Школа фінансової грамотності</div>
<div class="a" style="left:1290.8px;top:195.0px;width:365.2px;height:600.0px;background:#f9f8f6"></div>
<div class="a" style="left:106px;top:195.0px;width:1184.8px;height:600.0px;background:#fff"></div>
<div class="a" style="left:140.5px;top:195.0px;width:312.2px;height:18.3px;background:#d3e3fd"></div>
<div class="a" style="left:106px;top:213.3px;width:34.5px;height:68.1px;background:#d3e3fd"></div>
<div class="a" style="left:140.5px;top:213.3px;width:362.5px;height:68.1px;background:#e0e19c"></div>
<svg style="left:0;top:0" width="1800" height="831"><g stroke="#e1e1e1" stroke-width="1" shape-rendering="crispEdges" fill="none"><path d="M140.5 195.0 V213.3"/><path d="M140.5 213.3 V281.4"/><path d="M140.5 281.4 V795.0"/><path d="M180.7 195.0 V213.3"/><path d="M180.7 281.4 V795.0"/><path d="M232.2 195.0 V213.3"/><path d="M232.2 281.4 V795.0"/><path d="M293.8 195.0 V213.3"/><path d="M293.8 281.4 V795.0"/><path d="M344.7 195.0 V213.3"/><path d="M344.7 281.4 V795.0"/><path d="M397.4 195.0 V213.3"/><path d="M397.4 281.4 V795.0"/><path d="M452.7 195.0 V213.3"/><path d="M452.7 281.4 V795.0"/><path d="M503.0 195.0 V213.3"/><path d="M503.0 213.3 V281.4"/><path d="M503.0 281.4 V795.0"/><path d="M543.5 195.0 V213.3"/><path d="M543.5 213.3 V281.4"/><path d="M543.5 281.4 V795.0"/><path d="M583.6 195.0 V213.3"/><path d="M583.6 213.3 V281.4"/><path d="M583.6 281.4 V795.0"/><path d="M624.2 195.0 V213.3"/><path d="M624.2 281.4 V795.0"/><path d="M664.6 195.0 V213.3"/><path d="M664.6 281.4 V795.0"/><path d="M704.8 195.0 V213.3"/><path d="M704.8 281.4 V795.0"/><path d="M745.1 195.0 V213.3"/><path d="M745.1 281.4 V795.0"/><path d="M806.6 195.0 V213.3"/><path d="M806.6 281.4 V795.0"/><path d="M846.8 195.0 V213.3"/><path d="M846.8 281.4 V795.0"/><path d="M887.4 195.0 V213.3"/><path d="M887.4 281.4 V795.0"/><path d="M927.7 195.0 V213.3"/><path d="M927.7 281.4 V795.0"/><path d="M968.0 195.0 V213.3"/><path d="M968.0 281.4 V795.0"/><path d="M1008.4 195.0 V213.3"/><path d="M1008.4 281.4 V795.0"/><path d="M1048.7 195.0 V213.3"/><path d="M1048.7 281.4 V795.0"/><path d="M1089.0 195.0 V213.3"/><path d="M1089.0 213.3 V281.4"/><path d="M1089.0 281.4 V795.0"/><path d="M1129.4 195.0 V213.3"/><path d="M1129.4 213.3 V281.4"/><path d="M1129.4 281.4 V795.0"/><path d="M1169.7 195.0 V213.3"/><path d="M1169.7 213.3 V281.4"/><path d="M1169.7 281.4 V795.0"/><path d="M1210.0 195.0 V213.3"/><path d="M1210.0 213.3 V281.4"/><path d="M1210.0 281.4 V795.0"/><path d="M1250.4 195.0 V213.3"/><path d="M1250.4 213.3 V281.4"/><path d="M1250.4 281.4 V795.0"/><path d="M1290.8 195.0 V213.3"/><path d="M1290.8 213.3 V281.4"/><path d="M1290.8 281.4 V795.0"/><path d="M106 213.3 H1290.8"/><path d="M106 281.4 H1290.8"/><path d="M106 298.4 H1290.8"/><path d="M106 315.3 H1290.8"/><path d="M106 332.3 H1290.8"/><path d="M106 349.3 H1290.8"/><path d="M106 366.2 H1290.8"/><path d="M106 383.2 H1290.8"/><path d="M106 400.1 H1290.8"/><path d="M106 417.1 H1290.8"/><path d="M106 434.1 H1290.8"/><path d="M106 451.0 H1290.8"/><path d="M106 468.0 H1290.8"/><path d="M106 485.0 H1290.8"/><path d="M106 501.9 H1290.8"/><path d="M106 518.9 H1290.8"/><path d="M106 535.8 H1290.8"/><path d="M106 552.8 H1290.8"/><path d="M106 569.8 H1290.8"/><path d="M106 586.7 H1290.8"/><path d="M106 603.7 H1290.8"/><path d="M106 620.7 H1290.8"/><path d="M106 637.6 H1290.8"/><path d="M106 654.6 H1290.8"/><path d="M106 671.5 H1290.8"/><path d="M106 688.5 H1290.8"/><path d="M106 705.5 H1290.8"/><path d="M106 722.4 H1290.8"/><path d="M106 739.4 H1290.8"/><path d="M106 756.4 H1290.8"/><path d="M106 773.3 H1290.8"/><path d="M106 790.3 H1290.8"/><path d="M106 795.0 H1656.0"/></g></svg>
<div class="a" style="left:674.5px;top:214px;width:377.5px;height:209.5px;background:#fff"></div>
<div class="a" style="left:106px;top:212.3px;width:1184.8px;height:1px;background:#d4d4d4"></div>
<div class="a" style="left:139.5px;top:195.0px;width:1px;height:600.0px;background:#d4d4d4"></div>
<div class="a" style="left:106px;top:195.0px;width:34.5px;height:18.3px;background:#f8f9fa"></div>
<div class="a" style="left:137.0px;top:195.0px;width:3.5px;height:18.3px;background:#c4c7c5"></div>
<div class="a" style="left:106px;top:209.8px;width:34.5px;height:3.5px;background:#c4c7c5"></div>
<div class="t" style="left:160.60px;top:199.85px;font-size:8.8px;color:#243b66;font-weight:bold;transform:translateX(-50%);transform-origin:center center;">A</div>
<div class="t" style="left:206.45px;top:199.85px;font-size:8.8px;color:#243b66;font-weight:bold;transform:translateX(-50%);transform-origin:center center;">B</div>
<div class="t" style="left:263.00px;top:199.85px;font-size:8.8px;color:#243b66;font-weight:bold;transform:translateX(-50%);transform-origin:center center;">C</div>
<div class="t" style="left:319.25px;top:199.85px;font-size:8.8px;color:#243b66;font-weight:bold;transform:translateX(-50%);transform-origin:center center;">D</div>
<div class="t" style="left:371.05px;top:199.85px;font-size:8.8px;color:#243b66;font-weight:bold;transform:translateX(-50%);transform-origin:center center;">E</div>
<div class="t" style="left:425.05px;top:199.85px;font-size:8.8px;color:#243b66;font-weight:bold;transform:translateX(-50%);transform-origin:center center;">F</div>
<div class="t" style="left:477.85px;top:199.85px;font-size:8.8px;color:#5f6368;font-weight:normal;transform:translateX(-50%);transform-origin:center center;">G</div>
<div class="t" style="left:523.25px;top:199.85px;font-size:8.8px;color:#5f6368;font-weight:normal;transform:translateX(-50%);transform-origin:center center;">H</div>
<div class="t" style="left:563.55px;top:199.85px;font-size:8.8px;color:#5f6368;font-weight:normal;transform:translateX(-50%);transform-origin:center center;">I</div>
<div class="t" style="left:603.90px;top:199.85px;font-size:8.8px;color:#5f6368;font-weight:normal;transform:translateX(-50%);transform-origin:center center;">J</div>
<div class="t" style="left:644.40px;top:199.85px;font-size:8.8px;color:#5f6368;font-weight:normal;transform:translateX(-50%);transform-origin:center center;">K</div>
<div class="t" style="left:684.70px;top:199.85px;font-size:8.8px;color:#5f6368;font-weight:normal;transform:translateX(-50%);transform-origin:center center;">L</div>
<div class="t" style="left:724.95px;top:199.85px;font-size:8.8px;color:#5f6368;font-weight:normal;transform:translateX(-50%);transform-origin:center center;">M</div>
<div class="t" style="left:775.85px;top:199.85px;font-size:8.8px;color:#5f6368;font-weight:normal;transform:translateX(-50%);transform-origin:center center;">N</div>
<div class="t" style="left:826.70px;top:199.85px;font-size:8.8px;color:#5f6368;font-weight:normal;transform:translateX(-50%);transform-origin:center center;">O</div>
<div class="t" style="left:867.10px;top:199.85px;font-size:8.8px;color:#5f6368;font-weight:normal;transform:translateX(-50%);transform-origin:center center;">P</div>
<div class="t" style="left:907.55px;top:199.85px;font-size:8.8px;color:#5f6368;font-weight:normal;transform:translateX(-50%);transform-origin:center center;">Q</div>
<div class="t" style="left:947.85px;top:199.85px;font-size:8.8px;color:#5f6368;font-weight:normal;transform:translateX(-50%);transform-origin:center center;">R</div>
<div class="t" style="left:988.20px;top:199.85px;font-size:8.8px;color:#5f6368;font-weight:normal;transform:translateX(-50%);transform-origin:center center;">S</div>
<div class="t" style="left:1028.55px;top:199.85px;font-size:8.8px;color:#5f6368;font-weight:normal;transform:translateX(-50%);transform-origin:center center;">T</div>
<div class="t" style="left:1068.85px;top:199.85px;font-size:8.8px;color:#5f6368;font-weight:normal;transform:translateX(-50%);transform-origin:center center;">U</div>
<div class="t" style="left:1109.20px;top:199.85px;font-size:8.8px;color:#5f6368;font-weight:normal;transform:translateX(-50%);transform-origin:center center;">V</div>
<div class="t" style="left:1149.55px;top:199.85px;font-size:8.8px;color:#5f6368;font-weight:normal;transform:translateX(-50%);transform-origin:center center;">W</div>
<div class="t" style="left:1189.85px;top:199.85px;font-size:8.8px;color:#5f6368;font-weight:normal;transform:translateX(-50%);transform-origin:center center;">X</div>
<div class="t" style="left:1230.20px;top:199.85px;font-size:8.8px;color:#5f6368;font-weight:normal;transform:translateX(-50%);transform-origin:center center;">Y</div>
<div class="t" style="left:1270.60px;top:199.85px;font-size:8.8px;color:#5f6368;font-weight:normal;transform:translateX(-50%);transform-origin:center center;">Z</div>
<div class="t" style="left:123.30px;top:243.35px;font-size:8.5px;color:#1f1f1f;font-weight:bold;transform:translateX(-50%);transform-origin:center center;">1</div>
<div class="t" style="left:123.30px;top:285.89px;font-size:8.5px;color:#5f6368;font-weight:normal;transform:translateX(-50%);transform-origin:center center;">2</div>
<div class="t" style="left:123.30px;top:302.85px;font-size:8.5px;color:#5f6368;font-weight:normal;transform:translateX(-50%);transform-origin:center center;">3</div>
<div class="t" style="left:123.30px;top:319.81px;font-size:8.5px;color:#5f6368;font-weight:normal;transform:translateX(-50%);transform-origin:center center;">4</div>
<div class="t" style="left:123.30px;top:336.78px;font-size:8.5px;color:#5f6368;font-weight:normal;transform:translateX(-50%);transform-origin:center center;">5</div>
<div class="t" style="left:123.30px;top:353.74px;font-size:8.5px;color:#5f6368;font-weight:normal;transform:translateX(-50%);transform-origin:center center;">6</div>
<div class="t" style="left:123.30px;top:370.70px;font-size:8.5px;color:#5f6368;font-weight:normal;transform:translateX(-50%);transform-origin:center center;">7</div>
<div class="t" style="left:123.30px;top:387.66px;font-size:8.5px;color:#5f6368;font-weight:normal;transform:translateX(-50%);transform-origin:center center;">8</div>
<div class="t" style="left:123.30px;top:404.63px;font-size:8.5px;color:#5f6368;font-weight:normal;transform:translateX(-50%);transform-origin:center center;">9</div>
<div class="t" style="left:123.30px;top:421.59px;font-size:8.5px;color:#5f6368;font-weight:normal;transform:translateX(-50%);transform-origin:center center;">10</div>
<div class="t" style="left:123.30px;top:438.55px;font-size:8.5px;color:#5f6368;font-weight:normal;transform:translateX(-50%);transform-origin:center center;">11</div>
<div class="t" style="left:123.30px;top:455.52px;font-size:8.5px;color:#5f6368;font-weight:normal;transform:translateX(-50%);transform-origin:center center;">12</div>
<div class="t" style="left:123.30px;top:472.48px;font-size:8.5px;color:#5f6368;font-weight:normal;transform:translateX(-50%);transform-origin:center center;">13</div>
<div class="t" style="left:123.30px;top:489.44px;font-size:8.5px;color:#5f6368;font-weight:normal;transform:translateX(-50%);transform-origin:center center;">14</div>
<div class="t" style="left:123.30px;top:506.41px;font-size:8.5px;color:#5f6368;font-weight:normal;transform:translateX(-50%);transform-origin:center center;">15</div>
<div class="t" style="left:123.30px;top:523.37px;font-size:8.5px;color:#5f6368;font-weight:normal;transform:translateX(-50%);transform-origin:center center;">16</div>
<div class="t" style="left:123.30px;top:540.33px;font-size:8.5px;color:#5f6368;font-weight:normal;transform:translateX(-50%);transform-origin:center center;">17</div>
<div class="t" style="left:123.30px;top:557.29px;font-size:8.5px;color:#5f6368;font-weight:normal;transform:translateX(-50%);transform-origin:center center;">18</div>
<div class="t" style="left:123.30px;top:574.26px;font-size:8.5px;color:#5f6368;font-weight:normal;transform:translateX(-50%);transform-origin:center center;">19</div>
<div class="t" style="left:123.30px;top:591.22px;font-size:8.5px;color:#5f6368;font-weight:normal;transform:translateX(-50%);transform-origin:center center;">20</div>
<div class="t" style="left:123.30px;top:608.18px;font-size:8.5px;color:#5f6368;font-weight:normal;transform:translateX(-50%);transform-origin:center center;">21</div>
<div class="t" style="left:123.30px;top:625.15px;font-size:8.5px;color:#5f6368;font-weight:normal;transform:translateX(-50%);transform-origin:center center;">22</div>
<div class="t" style="left:123.30px;top:642.11px;font-size:8.5px;color:#5f6368;font-weight:normal;transform:translateX(-50%);transform-origin:center center;">23</div>
<div class="t" style="left:123.30px;top:659.07px;font-size:8.5px;color:#5f6368;font-weight:normal;transform:translateX(-50%);transform-origin:center center;">24</div>
<div class="t" style="left:123.30px;top:676.04px;font-size:8.5px;color:#5f6368;font-weight:normal;transform:translateX(-50%);transform-origin:center center;">25</div>
<div class="t" style="left:123.30px;top:693.00px;font-size:8.5px;color:#5f6368;font-weight:normal;transform:translateX(-50%);transform-origin:center center;">26</div>
<div class="t" style="left:123.30px;top:709.96px;font-size:8.5px;color:#5f6368;font-weight:normal;transform:translateX(-50%);transform-origin:center center;">27</div>
<div class="t" style="left:123.30px;top:726.92px;font-size:8.5px;color:#5f6368;font-weight:normal;transform:translateX(-50%);transform-origin:center center;">28</div>
<div class="t" style="left:123.30px;top:743.89px;font-size:8.5px;color:#5f6368;font-weight:normal;transform:translateX(-50%);transform-origin:center center;">29</div>
<div class="t" style="left:123.30px;top:760.85px;font-size:8.5px;color:#5f6368;font-weight:normal;transform:translateX(-50%);transform-origin:center center;">30</div>
<div class="t" style="left:123.30px;top:777.81px;font-size:8.5px;color:#5f6368;font-weight:normal;transform:translateX(-50%);transform-origin:center center;">31</div>
<div class="a" style="left:233.4px;top:384px;width:218.1px;height:16px;background:#fff"></div>
<div class="a" style="left:181.9px;top:452px;width:110.7px;height:15px;background:#fff"></div>
<div class="a" style="left:398.6px;top:452px;width:183.8px;height:15px;background:#fff"></div>
<div class="a" style="left:181.9px;top:468px;width:161.6px;height:16px;background:#fff"></div>
<div class="a" style="left:398.6px;top:502px;width:143.7px;height:16px;background:#fff"></div>
<div class="a" style="left:181.9px;top:519px;width:161.6px;height:16px;background:#fff"></div>
<div class="a" style="left:398.6px;top:519px;width:406.8px;height:16px;background:#fff"></div>
<div class="a" style="left:181.9px;top:553px;width:110.7px;height:16px;background:#fff"></div>
<div class="a" style="left:181.9px;top:638px;width:110.7px;height:16px;background:#fff"></div>
<div class="a" style="left:181.9px;top:706px;width:110.7px;height:16px;background:#fff"></div>
<div class="t" style="left:143.00px;top:234.45px;font-size:14px;color:#3a9a5c;font-weight:bold;transform: scaleX(1.162);transform-origin:left center;">Школа фінансової грамотності</div>
<div class="t" style="left:143.30px;top:251.89px;font-size:11px;color:#222;font-weight:normal;">від НБУ</div>
<div class="a" style="left:180.7px;top:380.2px;width:51.5px;height:20.0px;overflow:hidden">
<div class="t" style="left:3.3px;top:5.05px;font-size:14.5px;color:#62664a;transform:scaleX(1.0);transform-origin:left center">Родина</div>
</div>
<div class="t" style="left:235.20px;top:388.89px;font-size:11px;color:#3a3a3a;font-weight:normal;transform: scaleX(1.044);transform-origin:left center;">Тарас Шевченко і Леся Українка</div>
<div class="t" style="left:183.10px;top:422.69px;font-size:11px;color:#1b1b1b;font-weight:bold;transform: scaleX(1.0);transform-origin:left center;">Ціль 1</div>
<div class="t" style="left:183.10px;top:439.66px;font-size:11px;color:#1b1b1b;font-weight:bold;transform: scaleX(1.0);transform-origin:left center;">Назва</div>
<div class="t" style="right:1404.80px;top:439.66px;font-size:11px;color:#262626;font-weight:normal;transform: scaleX(1.0);transform-origin:right center;">Сума, грн</div>
<div class="t" style="left:399.80px;top:439.66px;font-size:11px;color:#262626;font-weight:normal;transform: scaleX(1.035);transform-origin:left center;">Коментар</div>
<div class="t" style="left:183.10px;top:456.62px;font-size:11px;color:#1b1b1b;font-weight:bold;transform: scaleX(1.0);transform-origin:left center;">Фінансова безпека</div>
<div class="t" style="right:1404.80px;top:456.62px;font-size:11px;color:#262626;font-weight:normal;transform: scaleX(1.0);transform-origin:right center;">60000</div>
<div class="t" style="left:400.60px;top:456.62px;font-size:11px;color:#262626;font-weight:normal;transform: scaleX(1.044);transform-origin:left center;">(витрати родини на 6/12/24 місяці)</div>
<div class="t" style="left:183.10px;top:473.58px;font-size:11px;color:#1b1b1b;font-weight:bold;transform: scaleX(1.0);transform-origin:left center;">Витрати на 1 місяць</div>
<div class="t" style="right:1404.80px;top:473.58px;font-size:11px;color:#262626;font-weight:normal;transform: scaleX(1.0);transform-origin:right center;">10000</div>
<div class="t" style="left:183.10px;top:507.51px;font-size:11px;color:#1b1b1b;font-weight:bold;transform: scaleX(1.0);transform-origin:left center;">Строк</div>
<div class="t" style="right:1404.80px;top:507.51px;font-size:11px;color:#262626;font-weight:normal;transform: scaleX(1.043);transform-origin:right center;">8/1/2026</div>
<div class="t" style="left:400.60px;top:507.51px;font-size:11px;color:#262626;font-weight:normal;transform: scaleX(1.044);transform-origin:left center;">(дата, коли ціль буде досягнуто)</div>
<div class="a" style="left:180.7px;top:518.9px;width:164.0px;height:17.0px;overflow:hidden">
<div class="t" style="left:2.4px;top:5.59px;font-size:11px;color:#1b1b1b;font-weight:bold;transform:scaleX(1.0);transform-origin:left center">Розмір щомісячних заощаджень</div>
</div>
<div class="t" style="right:1404.80px;top:524.47px;font-size:11px;color:#262626;font-weight:normal;transform: scaleX(1.0);transform-origin:right center;">5000</div>
<div class="t" style="left:400.60px;top:524.47px;font-size:11px;color:#262626;font-weight:normal;transform: scaleX(1.044);transform-origin:left center;">(сума, яку потрібно щомісячно відкладати, щоб досягти ціль у вказаний строк)</div>
<div class="t" style="left:183.10px;top:558.40px;font-size:11px;color:#1b1b1b;font-weight:bold;transform: scaleX(1.0);transform-origin:left center;">Виконання плану</div>
<div class="a" style="left:232.2px;top:569.8px;width:61.6px;height:17.0px;overflow:hidden">
<div class="t" style="left:2.4px;top:5.59px;font-size:11px;color:#262626;font-weight:normal;transform:scaleX(1.035);transform-origin:left center">Місяць 1</div>
</div>
<div class="a" style="left:293.8px;top:569.8px;width:50.9px;height:17.0px;overflow:hidden">
<div class="t" style="left:2.4px;top:5.59px;font-size:11px;color:#262626;font-weight:normal;transform:scaleX(1.035);transform-origin:left center">Місяць 2</div>
</div>
<div class="a" style="left:344.7px;top:569.8px;width:52.7px;height:17.0px;overflow:hidden">
<div class="t" style="left:2.4px;top:5.59px;font-size:11px;color:#262626;font-weight:normal;transform:scaleX(1.035);transform-origin:left center">Місяць 3</div>
</div>
<div class="a" style="left:397.4px;top:569.8px;width:55.3px;height:17.0px;overflow:hidden">
<div class="t" style="left:2.4px;top:5.59px;font-size:11px;color:#262626;font-weight:normal;transform:scaleX(1.035);transform-origin:left center">Місяць 4</div>
</div>
<div class="a" style="left:452.7px;top:569.8px;width:50.3px;height:17.0px;overflow:hidden">
<div class="t" style="left:2.4px;top:5.59px;font-size:11px;color:#262626;font-weight:normal;transform:scaleX(1.035);transform-origin:left center">Місяць 5</div>
</div>
<div class="a" style="left:503.0px;top:569.8px;width:40.5px;height:17.0px;overflow:hidden">
<div class="t" style="left:2.4px;top:5.59px;font-size:11px;color:#262626;font-weight:normal;transform:scaleX(1.035);transform-origin:left center">Місяць 6</div>
</div>
<div class="a" style="left:543.5px;top:569.8px;width:40.1px;height:17.0px;overflow:hidden">
<div class="t" style="left:2.4px;top:5.59px;font-size:11px;color:#262626;font-weight:normal;transform:scaleX(1.035);transform-origin:left center">Місяць 7</div>
</div>
<div class="a" style="left:583.6px;top:569.8px;width:40.6px;height:17.0px;overflow:hidden">
<div class="t" style="left:2.4px;top:5.59px;font-size:11px;color:#262626;font-weight:normal;transform:scaleX(1.035);transform-origin:left center">Місяць 8</div>
</div>
<div class="a" style="left:624.2px;top:569.8px;width:40.4px;height:17.0px;overflow:hidden">
<div class="t" style="left:2.4px;top:5.59px;font-size:11px;color:#262626;font-weight:normal;transform:scaleX(1.035);transform-origin:left center">Місяць 9</div>
</div>
<div class="a" style="left:664.6px;top:569.8px;width:40.2px;height:17.0px;overflow:hidden">
<div class="t" style="left:2.4px;top:5.59px;font-size:11px;color:#262626;font-weight:normal;transform:scaleX(1.035);transform-origin:left center">Місяць 10</div>
</div>
<div class="a" style="left:704.8px;top:569.8px;width:40.3px;height:17.0px;overflow:hidden">
<div class="t" style="left:2.4px;top:5.59px;font-size:11px;color:#262626;font-weight:normal;transform:scaleX(1.035);transform-origin:left center">Місяць 11</div>
</div>
<div class="a" style="left:745.1px;top:569.8px;width:61.5px;height:17.0px;overflow:hidden">
<div class="t" style="left:2.4px;top:5.59px;font-size:11px;color:#262626;font-weight:normal;transform:scaleX(1.035);transform-origin:left center">Місяць 12</div>
</div>
<div class="t" style="left:809.00px;top:575.36px;font-size:11px;color:#262626;font-weight:normal;transform: scaleX(1.0);transform-origin:left center;">Всього</div>
<div class="t" style="left:183.10px;top:592.32px;font-size:11px;color:#262626;font-weight:normal;transform: scaleX(1.035);transform-origin:left center;">План</div>
<div class="t" style="right:1508.40px;top:592.32px;font-size:11px;color:#262626;font-weight:normal;transform: scaleX(1.0);transform-origin:right center;">5000</div>
<div class="t" style="right:1457.50px;top:592.32px;font-size:11px;color:#262626;font-weight:normal;transform: scaleX(1.0);transform-origin:right center;">5000</div>
<div class="t" style="right:1404.80px;top:592.32px;font-size:11px;color:#262626;font-weight:normal;transform: scaleX(1.0);transform-origin:right center;">5000</div>
<div class="t" style="right:1349.50px;top:592.32px;font-size:11px;color:#262626;font-weight:normal;transform: scaleX(1.0);transform-origin:right center;">5000</div>
<div class="t" style="right:1299.20px;top:592.32px;font-size:11px;color:#262626;font-weight:normal;transform: scaleX(1.0);transform-origin:right center;">5000</div>
<div class="t" style="right:1258.70px;top:592.32px;font-size:11px;color:#262626;font-weight:normal;transform: scaleX(1.0);transform-origin:right center;">5000</div>
<div class="t" style="right:1218.60px;top:592.32px;font-size:11px;color:#262626;font-weight:normal;transform: scaleX(1.0);transform-origin:right center;">5000</div>
<div class="t" style="right:1178.00px;top:592.32px;font-size:11px;color:#262626;font-weight:normal;transform: scaleX(1.0);transform-origin:right center;">5000</div>
<div class="t" style="right:1137.60px;top:592.32px;font-size:11px;color:#262626;font-weight:normal;transform: scaleX(1.0);transform-origin:right center;">5000</div>
<div class="t" style="right:1097.40px;top:592.32px;font-size:11px;color:#262626;font-weight:normal;transform: scaleX(1.0);transform-origin:right center;">5000</div>
<div class="t" style="right:1057.10px;top:592.32px;font-size:11px;color:#262626;font-weight:normal;transform: scaleX(1.0);transform-origin:right center;">5000</div>
<div class="t" style="right:995.60px;top:592.32px;font-size:11px;color:#262626;font-weight:normal;transform: scaleX(1.0);transform-origin:right center;">5000</div>
<div class="t" style="right:955.40px;top:592.32px;font-size:11px;color:#1b1b1b;font-weight:bold;transform: scaleX(1.0);transform-origin:right center;">60000</div>
<div class="t" style="left:183.10px;top:609.29px;font-size:11px;color:#262626;font-weight:normal;transform: scaleX(1.035);transform-origin:left center;">Факт</div>
<div class="t" style="right:1508.40px;top:609.29px;font-size:11px;color:#262626;font-weight:normal;transform: scaleX(1.0);transform-origin:right center;">5000</div>
<div class="t" style="right:1457.50px;top:609.29px;font-size:11px;color:#262626;font-weight:normal;transform: scaleX(1.0);transform-origin:right center;">6000</div>
<div class="t" style="right:1404.80px;top:609.29px;font-size:11px;color:#262626;font-weight:normal;transform: scaleX(1.0);transform-origin:right center;">4000</div>
<div class="t" style="left:183.10px;top:626.25px;font-size:11px;color:#262626;font-weight:normal;transform: scaleX(1.035);transform-origin:left center;">Залишок</div>
<div class="t" style="right:1508.40px;top:626.25px;font-size:11px;color:#262626;font-weight:normal;transform: scaleX(1.0);transform-origin:right center;">5000</div>
<div class="t" style="right:1457.50px;top:626.25px;font-size:11px;color:#262626;font-weight:normal;transform: scaleX(1.0);transform-origin:right center;">11000</div>
<div class="t" style="right:1404.80px;top:626.25px;font-size:11px;color:#262626;font-weight:normal;transform: scaleX(1.0);transform-origin:right center;">15000</div>
<div class="t" style="right:1349.50px;top:626.25px;font-size:11px;color:#262626;font-weight:normal;transform: scaleX(1.0);transform-origin:right center;">15000</div>
<div class="t" style="right:1299.20px;top:626.25px;font-size:11px;color:#262626;font-weight:normal;transform: scaleX(1.0);transform-origin:right center;">15000</div>
<div class="t" style="right:1258.70px;top:626.25px;font-size:11px;color:#262626;font-weight:normal;transform: scaleX(1.0);transform-origin:right center;">15000</div>
<div class="t" style="right:1218.60px;top:626.25px;font-size:11px;color:#262626;font-weight:normal;transform: scaleX(1.0);transform-origin:right center;">15000</div>
<div class="t" style="right:1178.00px;top:626.25px;font-size:11px;color:#262626;font-weight:normal;transform: scaleX(1.0);transform-origin:right center;">15000</div>
<div class="t" style="right:1137.60px;top:626.25px;font-size:11px;color:#262626;font-weight:normal;transform: scaleX(1.0);transform-origin:right center;">15000</div>
<div class="t" style="right:1097.40px;top:626.25px;font-size:11px;color:#262626;font-weight:normal;transform: scaleX(1.0);transform-origin:right center;">15000</div>
<div class="t" style="right:1057.10px;top:626.25px;font-size:11px;color:#262626;font-weight:normal;transform: scaleX(1.0);transform-origin:right center;">15000</div>
<div class="t" style="right:995.60px;top:626.25px;font-size:11px;color:#262626;font-weight:normal;transform: scaleX(1.0);transform-origin:right center;">15000</div>
<div class="t" style="right:955.40px;top:626.25px;font-size:11px;color:#1b1b1b;font-weight:bold;transform: scaleX(1.0);transform-origin:right center;">15000</div>
<div class="t" style="left:183.10px;top:643.21px;font-size:11px;color:#262626;font-weight:normal;transform: scaleX(1.03);transform-origin:left center;">Відхилення (+/-)</div>
<div class="t" style="right:955.40px;top:643.21px;font-size:11px;color:#262626;font-weight:normal;transform: scaleX(1.0);transform-origin:right center;">-45000</div>
<div class="t" style="left:183.10px;top:677.14px;font-size:11px;color:#1b1b1b;font-weight:bold;transform: scaleX(1.0);transform-origin:left center;">Ціль 2</div>
<div class="t" style="left:183.10px;top:694.10px;font-size:11px;color:#1b1b1b;font-weight:bold;transform: scaleX(1.0);transform-origin:left center;">Назва</div>
<div class="t" style="left:183.10px;top:711.06px;font-size:11px;color:#262626;font-weight:normal;transform: scaleX(1.03);transform-origin:left center;">Власне житло</div>
<div class="t" style="left:183.10px;top:761.95px;font-size:11px;color:#1b1b1b;font-weight:bold;transform: scaleX(1.0);transform-origin:left center;">Ціль 3</div>
<div class="t" style="left:183.10px;top:778.92px;font-size:11px;color:#1b1b1b;font-weight:bold;transform: scaleX(1.0);transform-origin:left center;">Назва</div>
<svg style="left:0;top:0" width="1800" height="831"><g stroke="#2a2a2a" stroke-width="1.1" fill="none"><path d="M180.7 569.8 H846.8"/><path d="M180.7 586.7 H846.8"/><path d="M180.7 603.7 H846.8"/><path d="M180.7 620.7 H846.8"/><path d="M180.7 637.6 H846.8"/><path d="M180.7 569.8 V637.6"/><path d="M232.2 569.8 V637.6"/><path d="M293.8 569.8 V637.6"/><path d="M344.7 569.8 V637.6"/><path d="M397.4 569.8 V637.6"/><path d="M452.7 569.8 V637.6"/><path d="M503.0 569.8 V637.6"/><path d="M543.5 569.8 V637.6"/><path d="M583.6 569.8 V637.6"/><path d="M624.2 569.8 V637.6"/><path d="M664.6 569.8 V637.6"/><path d="M704.8 569.8 V637.6"/><path d="M745.1 569.8 V637.6"/><path d="M806.6 569.8 V637.6"/><path d="M846.8 569.8 V637.6"/></g></svg>
<div class="t" style="left:619.00px;top:243.38px;font-size:9px;color:#1b1b1b;font-weight:bold;transform: scaleX(0.995);transform-origin:left center;">Цілі SMART</div>
<svg style="left:0;top:0" width="1800" height="831"><defs><pattern id="hatch" patternUnits="userSpaceOnUse" width="4" height="4" patternTransform="rotate(-35)"><rect width="4" height="4" fill="#737373"/><rect width="4" height="1.3" fill="#a0a0a0"/></pattern></defs><text transform="translate(699.76,271.61) scale(0.888,1)" font-family="Liberation Serif" font-weight="bold" font-size="59.41" stroke-linejoin="round" fill="#585858" stroke="#585858" stroke-width="3.83">S</text><text transform="translate(699.76,271.61) scale(0.888,1)" font-family="Liberation Serif" font-weight="bold" font-size="59.41" stroke-linejoin="round" fill="url(#hatch)" stroke="url(#hatch)" stroke-width="1.80">S</text><text transform="translate(766.12,272.19) scale(0.786,1)" font-family="Liberation Serif" font-weight="bold" font-size="61.21" stroke-linejoin="round" fill="#585858" stroke="#585858" stroke-width="4.32">M</text><text transform="translate(766.12,272.19) scale(0.786,1)" font-family="Liberation Serif" font-weight="bold" font-size="61.21" stroke-linejoin="round" fill="url(#hatch)" stroke="url(#hatch)" stroke-width="2.03">M</text><text transform="translate(843.00,272.80) scale(0.901,1)" font-family="Liberation Serif" font-weight="bold" font-size="61.21" stroke-linejoin="round" fill="#585858" stroke="#585858" stroke-width="3.77">A</text><text transform="translate(843.00,272.80) scale(0.901,1)" font-family="Liberation Serif" font-weight="bold" font-size="61.21" stroke-linejoin="round" fill="url(#hatch)" stroke="url(#hatch)" stroke-width="1.78">A</text><text transform="translate(917.05,272.19) scale(0.895,1)" font-family="Liberation Serif" font-weight="bold" font-size="61.21" stroke-linejoin="round" fill="#585858" stroke="#585858" stroke-width="3.80">R</text><text transform="translate(917.05,272.19) scale(0.895,1)" font-family="Liberation Serif" font-weight="bold" font-size="61.21" stroke-linejoin="round" fill="url(#hatch)" stroke="url(#hatch)" stroke-width="1.79">R</text><text transform="translate(992.54,272.19) scale(0.915,1)" font-family="Liberation Serif" font-weight="bold" font-size="61.21" stroke-linejoin="round" fill="#585858" stroke="#585858" stroke-width="3.72">T</text><text transform="translate(992.54,272.19) scale(0.915,1)" font-family="Liberation Serif" font-weight="bold" font-size="61.21" stroke-linejoin="round" fill="url(#hatch)" stroke="url(#hatch)" stroke-width="1.75">T</text><g transform="translate(688.2,0)"><path d="M0 287.6 H50 V371.7 L25 362.2 L0 371.7 Z" fill="#4a7fab"/><path d="M6.7 282.8 H43.6 L47.4 287.6 H43.6 V312.9 L24.9 324.3 L6.7 312.9 Z" fill="#2a5b8a"/><circle cx="24.9" cy="299" r="8.3" fill="none" stroke="#f2f2f2" stroke-width="1.5"/><circle cx="24.9" cy="299" r="2.3" fill="#f2f2f2"/><text x="25" y="338.2" font-family="Liberation Sans" font-weight="bold" font-size="7.3" fill="#eef3f6" fill-opacity=".9" text-anchor="middle" textLength="27.5" lengthAdjust="spacingAndGlyphs">Specific</text></g><g transform="translate(764.5,0)"><path d="M0 287.6 H50 V371.7 L25 362.2 L0 371.7 Z" fill="#159a8b"/><path d="M6.7 282.8 H43.6 L47.4 287.6 H43.6 V312.9 L24.9 324.3 L6.7 312.9 Z" fill="#0d7567"/><path d="M15.899999999999999 289 V307 H34.9" fill="none" stroke="#eef" stroke-width="1.3"/><path d="M19.9 305 V293 M23.4 305 V297 M26.9 305 V295 M30.4 305 V298" stroke="#eef" stroke-width="2"/><text x="25" y="338.2" font-family="Liberation Sans" font-weight="bold" font-size="7.3" fill="#eef3f6" fill-opacity=".9" text-anchor="middle" textLength="37" lengthAdjust="spacingAndGlyphs">Measurable</text></g><g transform="translate(837.2,0)"><path d="M0 287.6 H50 V371.7 L25 362.2 L0 371.7 Z" fill="#6aa840"/><path d="M6.7 282.8 H43.6 L47.4 287.6 H43.6 V312.9 L24.9 324.3 L6.7 312.9 Z" fill="#4b7e2b"/><path d="M15.899999999999999 289 V307 H34.9" fill="none" stroke="#eef" stroke-width="1.3"/><path d="M18.9 303 L22.9 299 L25.9 301 L32.9 293" fill="none" stroke="#eef" stroke-width="1.3"/><path d="M33.9 292 L28.9 293 L32.9 297 Z" fill="#eef"/><text x="25" y="338.2" font-family="Liberation Sans" font-weight="bold" font-size="7.3" fill="#eef3f6" fill-opacity=".9" text-anchor="middle" textLength="34" lengthAdjust="spacingAndGlyphs">Attainable</text></g><g transform="translate(913,0)"><path d="M0 287.6 H50 V371.7 L25 362.2 L0 371.7 Z" fill="#dfbd38"/><path d="M6.7 282.8 H43.6 L47.4 287.6 H43.6 V312.9 L24.9 324.3 L6.7 312.9 Z" fill="#ae8a2a"/><circle cx="21.4" cy="299" r="7" fill="none" stroke="#f6efd8" stroke-width="1.5"/><circle cx="28.4" cy="299" r="7" fill="none" stroke="#f6efd8" stroke-width="1.5"/><text x="25" y="338.2" font-family="Liberation Sans" font-weight="bold" font-size="7.3" fill="#eef3f6" fill-opacity=".9" text-anchor="middle" textLength="30" lengthAdjust="spacingAndGlyphs">Relevant</text></g><g transform="translate(986.5,0)"><path d="M0 287.6 H50 V371.7 L25 362.2 L0 371.7 Z" fill="#ec8b37"/><path d="M6.7 282.8 H43.6 L47.4 287.6 H43.6 V312.9 L24.9 324.3 L6.7 312.9 Z" fill="#c55f23"/><circle cx="24.9" cy="299" r="7.8" fill="none" stroke="#fbe6d3" stroke-width="1.5"/><path d="M24.9 295 V300 H27.9" fill="none" stroke="#fbe6d3" stroke-width="1.3"/><text x="25" y="338.2" font-family="Liberation Sans" font-weight="bold" font-size="7.3" fill="#eef3f6" fill-opacity=".9" text-anchor="middle" textLength="37" lengthAdjust="spacingAndGlyphs">Time Based</text></g><text x="713.1" y="399.9" font-family="Liberation Sans" font-size="9.3" fill="#585858" text-anchor="middle">Конкретна</text><text x="786.5" y="399.9" font-family="Liberation Sans" font-size="9.3" fill="#585858" text-anchor="middle">Вимірна</text><text x="866.3" y="399.9" font-family="Liberation Sans" font-size="9.3" fill="#585858" text-anchor="middle">Досяжна</text><text x="940" y="399.9" font-family="Liberation Sans" font-size="9.3" fill="#585858" text-anchor="middle">Актуальна</text><text x="1012.5" y="398.2" font-family="Liberation Sans" font-size="9.3" fill="#585858" text-anchor="middle">Обмежена</text><text x="1012.5" y="410.7" font-family="Liberation Sans" font-size="9.3" fill="#585858" text-anchor="middle">у часі</text></svg>
<svg style="left:430px;top:226px" width="36" height="24"><path d="M5 9 L17 3.5 L29 9" fill="none" stroke="#8cc063" stroke-width="2.6"/><path d="M17 3.5 L29 9 L17 14.5" fill="none" stroke="#4f5a3f" stroke-width="2.4"/><path d="M7 13 L17 17.5 L27 13" fill="none" stroke="#7fb85a" stroke-width="2.2"/><path d="M17 17.5 L27 13" fill="none" stroke="#4f5a3f" stroke-width="2.2"/></svg>
<div class="t" style="left:418.40px;top:251.89px;font-size:18.2px;color:#5f5f45;font-weight:normal;transform: scaleX(0.965);transform-origin:left center;">ТАΛАН</div>
<div class="t" style="left:424.00px;top:270.91px;font-size:4px;color:#88886a;font-weight:normal;">· · · · · · · · · · ·</div>
<div class="a" style="left:140.5px;top:280.4px;width:312.2px;height:1.6px;background:#8fa48c"></div>
<div class="a" style="left:451.7px;top:213.3px;width:1.8px;height:68.1px;background:#90a68e"></div>
<div class="a" style="left:449.0px;top:278.8px;width:8.4px;height:8.4px;border-radius:50%;background:#1f4fc0;border:1px solid #fff"></div>
<div class="a" style="left:106px;top:194.5px;width:1184.8px;height:1px;background:#e3e3e3"></div>
<div class="a" style="left:1646.5px;top:195.0px;width:9.5px;height:576.0px;background:#fff;border-left:1px solid #ececec"></div>
<svg style="left:1648px;top:772px" width="8" height="22"><path d="M1.5 7 L4 4.5 L6.5 7" fill="none" stroke="#9a9a9a" stroke-width="1.2"/><path d="M1.5 15 L4 17.5 L6.5 15" fill="none" stroke="#9a9a9a" stroke-width="1.2"/></svg>
<div class="a" style="left:140.5px;top:796.0px;width:1515.5px;height:8.5px;background:#fff"></div>
<div class="a" style="left:106px;top:796.0px;width:34.5px;height:8.5px;background:#fff;border-right:1px solid #d0d0d0"></div>
<svg style="left:1624px;top:795px" width="30" height="9"><path d="M8 2 L5.5 4.5 L8 7 M22 2 L24.5 4.5 L22 7" fill="none" stroke="#9a9a9a" stroke-width="1.2"/><path d="M15 1.5 V7.5" stroke="#cfcfcf" stroke-width="1"/></svg>
<div class="a" style="left:106px;top:804.5px;width:1550px;height:1px;background:#e3e3e3"></div>
<div class="a" style="left:106px;top:805.5px;width:1550px;height:25.5px;background:#f9f9fb;border-bottom-left-radius:8px"></div>
<svg style="left:146px;top:814px" width="12" height="12"><path d="M6 1.5 V10.5 M1.5 6 H10.5" stroke="#5f6368" stroke-width="1.3"/></svg>
<svg style="left:177px;top:814.5px" width="13" height="11"><path d="M1 2 H9 M1 5.5 H11 M1 9 H11" stroke="#6b6f74" stroke-width="1.4"/></svg>
<div class="a" style="left:207.2px;top:807.4px;width:54.9px;height:23.6px;background:#e1e9f7"></div>
<div class="t" style="left:217.20px;top:814.41px;font-size:10.5px;color:#0b57d0;font-weight:bold;transform: scaleX(1.0);transform-origin:left center;">Цілі</div>
<svg style="left:246.5px;top:818px" width="7" height="4"><path d="M0 0 H7 L3.5 4 Z" fill="#0b57d0"/></svg>
<div class="t" style="left:270.60px;top:814.41px;font-size:10.5px;color:#4a4d52;font-weight:normal;transform: scaleX(1.1);transform-origin:left center;">Витрати_місяць</div>
<svg style="left:366.5px;top:818px" width="7" height="4"><path d="M0 0 H7 L3.5 4 Z" fill="#6b6f74"/></svg>
<div class="t" style="left:390.30px;top:814.41px;font-size:10.5px;color:#4a4d52;font-weight:normal;transform: scaleX(1.1);transform-origin:left center;">Доходи</div>
<svg style="left:438.5px;top:818px" width="7" height="4"><path d="M0 0 H7 L3.5 4 Z" fill="#6b6f74"/></svg>
<svg style="left:1629px;top:814px" width="10" height="14"><path d="M7.5 1.5 L2.5 7 L7.5 12.5" fill="none" stroke="#5f6368" stroke-width="1.6"/></svg>
<div class="a" style="left:203px;top:0;width:148.5px;height:50px;background:rgba(40,40,40,0.42);border-radius:0 0 7px 7px"></div>
<div class="t" style="left:223.00px;top:12.15px;font-size:29px;color:#fff;font-weight:normal;transform: scaleX(0.948);transform-origin:left center;">13:37:41</div>
<svg style="left:1318.6px;top:34px" width="347.4" height="195" viewBox="0 0 347.4 195">
<defs>
<clipPath id="vc"><rect x="0" y="0" width="347.4" height="195" rx="12"/></clipPath>
<linearGradient id="wall" x1="0" y1="0" x2="1" y2="0">
<stop offset="0" stop-color="#aca49f"/><stop offset="0.3" stop-color="#b7aea9"/><stop offset="0.45" stop-color="#bdb3ad"/><stop offset="0.8" stop-color="#cabfb7"/><stop offset="1" stop-color="#cbc0b9"/></linearGradient>
<linearGradient id="wallv" x1="0" y1="0" x2="0" y2="1"><stop offset="0" stop-color="#fff" stop-opacity=".04"/><stop offset="1" stop-color="#7a6a70" stop-opacity=".08"/></linearGradient>
<radialGradient id="skin" cx="0.5" cy="0.3" r="0.7"><stop offset="0" stop-color="#cfaaa9"/><stop offset="0.55" stop-color="#c29ba0"/><stop offset="1" stop-color="#a7858c"/></radialGradient>
<linearGradient id="shirt" x1="0" y1="0" x2="1" y2="1"><stop offset="0" stop-color="#e0dee9"/><stop offset="0.6" stop-color="#cfcde6"/><stop offset="1" stop-color="#aab0de"/></linearGradient>
<filter id="bl" x="-20%" y="-20%" width="140%" height="140%"><feGaussianBlur stdDeviation="2.6"/></filter>
<filter id="bl2" x="-30%" y="-30%" width="160%" height="160%"><feGaussianBlur stdDeviation="1.2"/></filter>
</defs>
<g clip-path="url(#vc)">
<rect width="347.4" height="195" fill="url(#wall)"/>
<rect width="347.4" height="195" fill="url(#wallv)"/>
<g filter="url(#bl)">
<path d="M140 195 L145 165 Q200 150 262 138 Q305 130 347.4 134 V195 Z" fill="url(#shirt)"/>
<path d="M182 120 Q183 150 200 156 Q235 160 262 148 L268 110 Z" fill="#b4949c"/>
<path d="M160 55 Q160 -2 218 -4 Q276 -2 279 55 Q281 112 258 136 Q230 154 200 147 Q166 128 160 55 Z" fill="url(#skin)"/>
<path d="M170 5 Q218 -12 268 5" fill="none" stroke="#5e4a40" stroke-width="8"/><path d="M162 22 Q155 70 163 122" fill="none" stroke="#5a4842" stroke-width="6"/><path d="M262 6 Q281 40 278 85" fill="none" stroke="#604c42" stroke-width="11"/>
<ellipse cx="222" cy="26" rx="34" ry="15" fill="#dabfbf" opacity=".65"/>
<ellipse cx="202" cy="88" rx="8" ry="18" fill="#d9bcbc" opacity=".55"/>
<ellipse cx="176" cy="95" rx="12" ry="28" fill="#a08280" opacity=".3"/>
</g>
<g filter="url(#bl2)">
<ellipse cx="179.6" cy="62" rx="8.5" ry="3.6" fill="#3f4460"/>
<ellipse cx="232.4" cy="58" rx="8.5" ry="3.6" fill="#3f4460"/>
<path d="M168 51 Q181 45 194 50" fill="none" stroke="#8f6d77" stroke-width="2.6"/>
<path d="M220 46 Q234 40 249 46" fill="none" stroke="#8f6d77" stroke-width="2.6"/>
<ellipse cx="201" cy="122" rx="17" ry="7" fill="#ad7475"/>
<ellipse cx="202" cy="120.5" rx="9" ry="2.8" fill="#e9dede"/>
<path d="M193 101 Q202 107 211 101" fill="none" stroke="#9b7671" stroke-width="1.8"/>
<ellipse cx="274" cy="94" rx="3" ry="8" fill="#ebe3ea"/>
<circle cx="272" cy="113" r="4" fill="none" stroke="#dcd4cf" stroke-width="1.5"/>
<circle cx="163" cy="116" r="3" fill="none" stroke="#dcd4cf" stroke-width="1.2"/>
</g>
</g>
</svg>
<div class="a" style="left:1329px;top:185px;width:261px;height:33.5px;background:rgba(48,48,48,.8);border-radius:8px"></div>
<div class="t" style="left:1346.50px;top:191.28px;font-size:23.3px;color:#fff;font-weight:normal;transform: scaleX(1.092);transform-origin:left center;">Вікторія Ролік, НБУ</div>
<div class="t" style="left:62.60px;top:793.34px;font-size:32.2px;color:#fff;font-weight:normal;transform: scaleX(1.062);transform-origin:left center;">Экран Вікторія Ролік, НБУ</div>
<svg style="left:580px;top:645px" width="14" height="20"><path d="M1.5 1.5 V15 L5 11.5 L7.8 17.5 L10 16.5 L7.3 10.8 H12 Z" fill="#fff" stroke="#333" stroke-width="1.1" stroke-linejoin="round"/></svg>
</body></html>
